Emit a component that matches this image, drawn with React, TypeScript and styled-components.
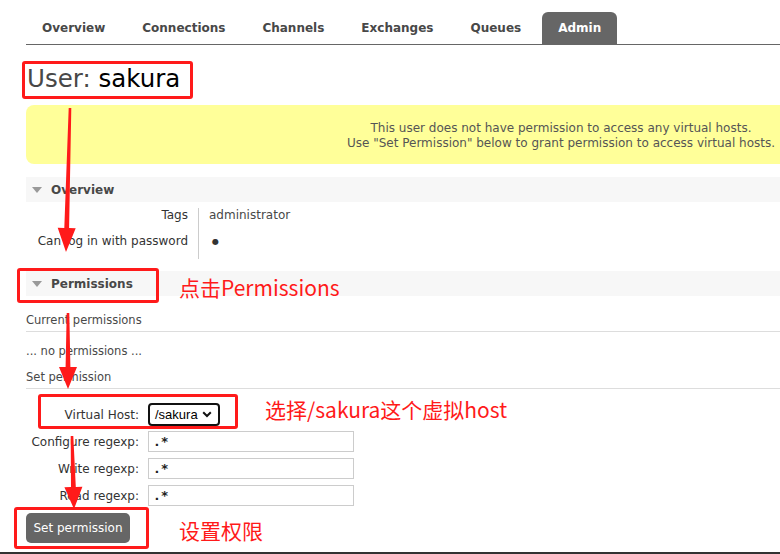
import styled, { createGlobalStyle } from 'styled-components';

const GlobalStyle = createGlobalStyle`
  html, body {
    margin: 0;
    padding: 0;
    background: #fff;
    overflow: hidden;
  }
  body {
    font-family: "DejaVu Sans", Verdana, sans-serif;
    font-size: 11px;
    color: #484848;
  }
`;

const tabs = ['Overview', 'Connections', 'Channels', 'Exchanges', 'Queues', 'Admin'];

type Arrow = { x1: number; y1: number; x2: number; y2: number; head: number };

const arrows: Arrow[] = [
  { x1: 70, y1: 108, x2: 66, y2: 252, head: 24 },
  { x1: 68, y1: 313, x2: 68, y2: 389, head: 22 },
  { x1: 72, y1: 436, x2: 74, y2: 509, head: 22 },
];

// arrow shaft + head as a single polygon
const arrowPoints = ({ x1, y1, x2, y2, head }: Arrow) => {
  const dx = x2 - x1;
  const dy = y2 - y1;
  const len = Math.hypot(dx, dy);
  const ux = dx / len;
  const uy = dy / len;
  const nx = -uy;
  const ny = ux;
  const bx = x2 - ux * head;
  const by = y2 - uy * head;
  const p = (x: number, y: number) => `${x.toFixed(1)},${y.toFixed(1)}`;
  return [
    p(x1 + nx * 1.3, y1 + ny * 1.3),
    p(bx + nx * 2.4, by + ny * 2.4),
    p(bx + nx * 9, by + ny * 9),
    p(x2, y2),
    p(bx - nx * 9, by - ny * 9),
    p(bx - nx * 2.4, by - ny * 2.4),
    p(x1 - nx * 1.3, y1 - ny * 1.3),
  ].join(' ');
};

const boxes = [
  { x: 22, y: 61, w: 171, h: 38 },
  { x: 17, y: 268, w: 142, h: 35 },
  { x: 38, y: 394, w: 200, h: 35 },
  { x: 14, y: 507, w: 135, h: 42 },
];

const notes = [
  { x: 179, y: 276, text: '点击Permissions' },
  { x: 265, y: 398, text: '选择/sakura这个虚拟host' },
  { x: 179, y: 519, text: '设置权限' },
];

const formRows = [
  { label: 'Configure regexp:', value: '.*' },
  { label: 'Write regexp:', value: '.*' },
  { label: 'Read regexp:', value: '.*' },
];

const App = () => (
  <Page>
    <GlobalStyle />
    <Main>
      <Nav>
        {tabs.map((t) => (
          <Tab key={t} $active={t === 'Admin'}>
            {t}
          </Tab>
        ))}
      </Nav>

      <Heading>
        User: <b>sakura</b>
      </Heading>

      <Warning>
        This user does not have permission to access any virtual hosts.
        <br />
        Use "Set Permission" below to grant permission to access virtual hosts.
      </Warning>

      <SectionHeader $top={13}>
        <Triangle />
        Overview
      </SectionHeader>
      <Facts>
        <tbody>
          <tr>
            <th>Tags</th>
            <td>administrator</td>
          </tr>
          <tr>
            <th>Can log in with password</th>
            <td>
              <Dot>●</Dot>
            </td>
          </tr>
        </tbody>
      </Facts>

      <SectionHeader $top={12}>
        <Triangle />
        Permissions
      </SectionHeader>
      <SubTitle $top={17}>Current permissions</SubTitle>
      <Plain>... no permissions ...</Plain>
      <SubTitle $top={11}>Set permission</SubTitle>

      <Form>
        <FormRow>
          <Label>Virtual Host:</Label>
          <SelectBox>
            /sakura
            <svg width="10" height="7" viewBox="0 0 10 7">
              <path d="M1.2 1.2 L5 5 L8.8 1.2" fill="none" stroke="#111" strokeWidth="2" />
            </svg>
          </SelectBox>
        </FormRow>
        {formRows.map((r) => (
          <FormRow key={r.label}>
            <Label>{r.label}</Label>
            <TextInput readOnly value={r.value} />
          </FormRow>
        ))}
      </Form>

      <SubmitButton type="button">Set permission</SubmitButton>
      <BottomBar />
    </Main>

    <Overlay>
      {boxes.map((b, i) => (
        <MarkBox key={i} style={{ left: b.x, top: b.y, width: b.w, height: b.h }} />
      ))}
      {notes.map((n) => (
        <Note key={n.text} style={{ left: n.x, top: n.y }}>
          {n.text}
        </Note>
      ))}
      <ArrowLayer width="780" height="554" viewBox="0 0 780 554">
        {arrows.map((a, i) => (
          <polygon key={i} points={arrowPoints(a)} fill="#ff1a1a" />
        ))}
      </ArrowLayer>
    </Overlay>
  </Page>
);

const Page = styled.div`
  position: relative;
  width: 780px;
  height: 554px;
  overflow: hidden;
`;

const Main = styled.div`
  margin-left: 26px;
  width: 1070px;
  display: flex;
  flex-direction: column;
`;

const Nav = styled.div`
  display: flex;
  margin-top: 12px;
  height: 32px;
  border-bottom: 1px solid #666;
`;

const Tab = styled.div<{ $active?: boolean }>`
  padding: 0 16px;
  margin-right: 5px;
  line-height: 32px;
  font-size: 12px;
  font-weight: bold;
  color: ${({ $active }) => ($active ? '#fff' : '#484848')};
  background: ${({ $active }) => ($active ? '#666' : 'transparent')};
  border-radius: 6px 6px 0 0;
`;

const Heading = styled.h1`
  margin: 19px 0 0 1px;
  font-size: 24.5px;
  line-height: 30px;
  font-weight: normal;
  color: #484848;

  b {
    font-weight: normal;
    color: #000;
  }
`;

const Warning = styled.p`
  margin: 11px 0 0;
  padding: 16px 14px 13px;
  background: #ffff99;
  border-radius: 8px;
  text-align: center;
  font-size: 12px;
  line-height: 15px;
  color: #555;
`;

const SectionHeader = styled.div<{ $top: number }>`
  display: flex;
  align-items: center;
  margin-top: ${({ $top }) => $top}px;
  height: 25px;
  padding-left: 6px;
  background: #f7f7f7;
  font-size: 12px;
  font-weight: bold;
  color: #484848;
`;

const Triangle = styled.span`
  width: 0;
  height: 0;
  margin-right: 9px;
  border-left: 5.5px solid transparent;
  border-right: 5.5px solid transparent;
  border-top: 6px solid #999;
`;

const Facts = styled.table`
  margin-top: 6px;
  border-collapse: collapse;

  th {
    width: 162px;
    padding: 0 10px 10px 0;
    text-align: right;
    font-weight: normal;
    line-height: 15px;
    font-size: 12px;
    color: #333;
    white-space: nowrap;
  }

  td {
    padding: 0 10px 10px;
    border-left: 1px solid #ccc;
    line-height: 15px;
    font-size: 12px;
    color: #484848;
  }
`;

const Dot = styled.span`
  font-size: 8px;
  padding-left: 3px;
  color: #333;
`;

const SubTitle = styled.div<{ $top: number }>`
  margin-top: ${({ $top }) => $top}px;
  padding-bottom: 3px;
  border-bottom: 1px solid #ddd;
  font-size: 11.5px;
  line-height: 15px;
  color: #484848;
`;

const Plain = styled.div`
  margin-top: 12px;
  font-size: 11.5px;
  line-height: 15px;
`;

const Form = styled.div`
  margin-top: 12px;
  display: flex;
  flex-direction: column;
`;

const FormRow = styled.div`
  display: flex;
  align-items: center;
  height: 27px;
`;

const Label = styled.label`
  width: 113px;
  margin-right: 9px;
  text-align: right;
  font-size: 12px;
  color: #333;
  white-space: nowrap;
`;

const SelectBox = styled.div`
  box-sizing: border-box;
  width: 72px;
  height: 23px;
  display: flex;
  align-items: center;
  justify-content: space-between;
  padding: 0 6px 0 5px;
  border: 2px solid #111;
  border-radius: 4px;
  font-family: "Liberation Sans", Arial, sans-serif;
  font-size: 13px;
  color: #000;
`;

const TextInput = styled.input`
  box-sizing: border-box;
  width: 206px;
  height: 21px;
  padding: 0 4px;
  border: 1px solid #ccc;
  font-family: "DejaVu Sans Mono", monospace;
  font-size: 13px;
  font-weight: bold;
  color: #222;
  outline: none;
`;

const SubmitButton = styled.button`
  align-self: flex-start;
  margin-top: 4px;
  height: 30px;
  width: 104px;
  padding: 0;
  border: none;
  border-radius: 5px;
  background: #666;
  color: #fff;
  font-family: "DejaVu Sans", Verdana, sans-serif;
  font-size: 12px;
`;

const BottomBar = styled.div`
  margin: 9px 0 0 -26px;
  height: 4px;
  background: #333;
`;

const Overlay = styled.div`
  position: absolute;
  inset: 0;
  pointer-events: none;
`;

const MarkBox = styled.div`
  position: absolute;
  box-sizing: border-box;
  border: 3px solid #ff1a1a;
  border-radius: 3px;
`;

const Note = styled.div`
  position: absolute;
  font-family: "Noto Sans CJK SC", sans-serif;
  font-size: 21px;
  line-height: 22px;
  color: #ff1a1a;
  white-space: nowrap;
`;

const ArrowLayer = styled.svg`
  position: absolute;
  left: 0;
  top: 0;
`;

export default App;
